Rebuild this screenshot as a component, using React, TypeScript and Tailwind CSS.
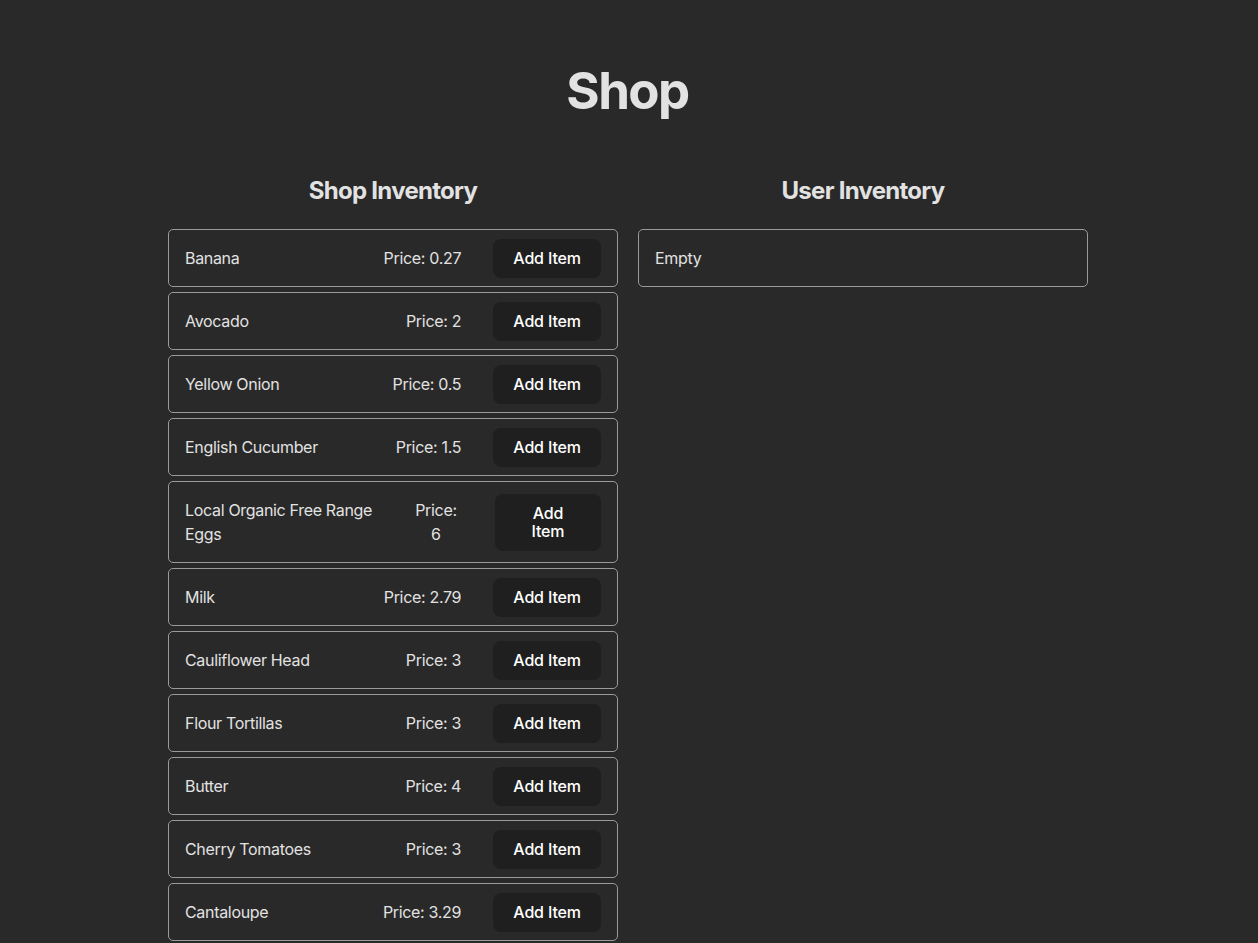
import React from 'react';

type Item = { name: string; price: number };

const shopItems: Item[] = [
  { name: 'Banana', price: 0.27 },
  { name: 'Avocado', price: 2 },
  { name: 'Yellow Onion', price: 0.5 },
  { name: 'English Cucumber', price: 1.5 },
  { name: 'Local Organic Free Range Eggs', price: 6 },
  { name: 'Milk', price: 2.79 },
  { name: 'Cauliflower Head', price: 3 },
  { name: 'Flour Tortillas', price: 3 },
  { name: 'Butter', price: 4 },
  { name: 'Cherry Tomatoes', price: 3 },
  { name: 'Cantaloupe', price: 3.29 },
];

function ShopRow({ item }: { item: Item }) {
  return (
    <div className="flex items-center justify-between border border-[#9a9a9a] rounded-[5px] px-4 py-2">
      <span className="py-2 leading-6">{item.name}</span>
      <div className="flex items-center gap-8">
        <span className="text-center leading-6">Price: {item.price}</span>
        <button className="bg-[#1f1f1f] text-white font-medium tracking-[-0.01em] rounded-lg border border-transparent px-[19.2px] py-[9.6px] leading-[18px]">
          Add Item
        </button>
      </div>
    </div>
  );
}

export default function App() {
  return (
    <div className="min-h-screen bg-[#292929] text-[#e2e2e2] font-['Inter',sans-serif] text-base tracking-[-0.02em] pt-[63px]">
      <h1 className="text-center text-[51px] leading-[1.1] font-bold tracking-[-0.03em] pr-[3px]">Shop</h1>

      <div className="w-[922px] mx-auto mt-[54px] grid grid-cols-[450px_450px] gap-5 items-start">
        <div>
          <h2 className="text-center text-2xl leading-9 font-bold tracking-[-0.03em] mb-5">Shop Inventory</h2>
          <div className="flex flex-col gap-[5px]">
            {shopItems.map((item) => (
              <ShopRow key={item.name} item={item} />
            ))}
          </div>
        </div>

        <div>
          <h2 className="text-center text-2xl leading-9 font-bold tracking-[-0.03em] mb-5">User Inventory</h2>
          <div className="border border-[#9a9a9a] rounded-[5px] px-4 py-2">
            <span className="block py-2 leading-6">Empty</span>
          </div>
        </div>
      </div>
    </div>
  );
}
